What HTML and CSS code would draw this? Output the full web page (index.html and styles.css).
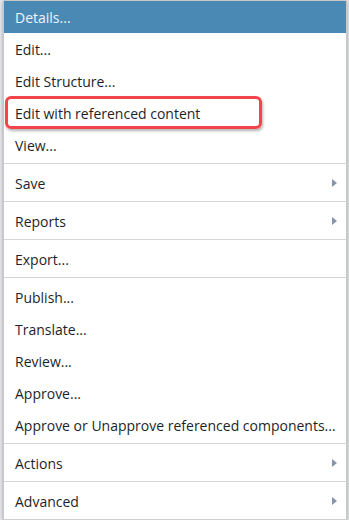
FILE: index.html
```html
<!DOCTYPE html>
<html lang="en-US">
<head>
  <meta charset="UTF-8">
  <title>Context menu</title>
  <link rel="stylesheet" href="styles.css">
</head>
<body>
  <div class="menu">
    <ul class="group first">
      <li class="item active">Details...</li>
      <li class="item">Edit...</li>
      <li class="item">Edit Structure...</li>
      <li class="item marked">Edit with referenced content</li>
      <li class="item">View...</li>
    </ul>
    <ul class="group">
      <li class="item sub">Save<span class="arrow"></span></li>
    </ul>
    <ul class="group">
      <li class="item sub">Reports<span class="arrow"></span></li>
    </ul>
    <ul class="group">
      <li class="item">Export...</li>
    </ul>
    <ul class="group">
      <li class="item">Publish...</li>
      <li class="item">Translate...</li>
      <li class="item">Review...</li>
      <li class="item">Approve...</li>
      <li class="item">Approve or Unapprove referenced components...</li>
    </ul>
    <ul class="group">
      <li class="item sub">Actions<span class="arrow"></span></li>
    </ul>
    <ul class="group last">
      <li class="item sub">Advanced<span class="arrow"></span></li>
    </ul>
  </div>
  <div class="under"></div>
</body>
</html>
```

FILE: styles.css
```css
html, body {
  margin: 0;
  padding: 0;
}
body {
  background: #e9ebee;
  font-family: "Open Sans", "Liberation Sans", sans-serif;
  font-size: 14px;
  color: #1d1f2a;
  height: 520px;
  overflow: hidden;
}
.menu {
  background: #fff;
  border: 1px solid #c8c8c8;
  border-bottom-color: #d0d0d0;
  box-shadow: 0 1px 4px rgba(0, 0, 0, 0.35);
  margin: 0 2px 0 3px;
  width: 342px;
  position: relative;
}
.group {
  list-style: none;
  margin: 0;
  padding: 3px 0 2px;
  border-top: 1px solid #d6d6d6;
}
.group.first {
  border-top: none;
  padding-top: 0;
}
.item {
  display: flex;
  align-items: center;
  justify-content: space-between;
  height: 32px;
  padding: 0 9px 0 11px;
  white-space: nowrap;
  position: relative;
}
.item.active {
  background: #4a89b4;
  color: #eef4fa;
}
.arrow {
  width: 0;
  height: 0;
  border-top: 4.5px solid transparent;
  border-bottom: 4.5px solid transparent;
  border-left: 5px solid #8795ab;
}
.item.marked::after {
  content: "";
  position: absolute;
  left: 1px;
  top: -1px;
  width: 251px;
  height: 27px;
  border: 3px solid #f2444a;
  border-radius: 6px;
  box-shadow: 1px 2px 3px rgba(0, 0, 0, 0.3);
}
.under {
  background: #3f7aa2;
  height: 4px;
  width: 38px;
  margin-left: 302px;
}
```
